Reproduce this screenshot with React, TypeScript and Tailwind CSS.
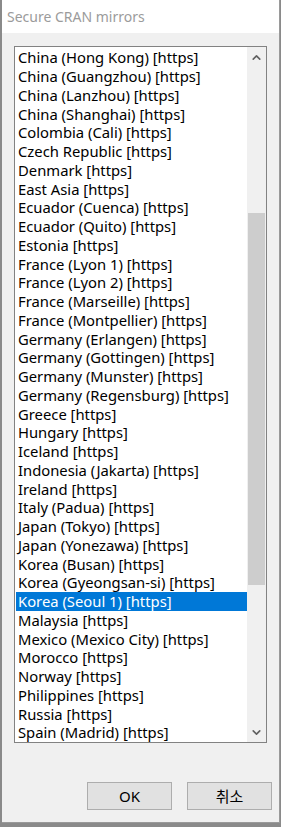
import { ChevronDown, ChevronUp } from "lucide-react";

const mirrors = [
  "China (Hong Kong) [https]",
  "China (Guangzhou) [https]",
  "China (Lanzhou) [https]",
  "China (Shanghai) [https]",
  "Colombia (Cali) [https]",
  "Czech Republic [https]",
  "Denmark [https]",
  "East Asia [https]",
  "Ecuador (Cuenca) [https]",
  "Ecuador (Quito) [https]",
  "Estonia [https]",
  "France (Lyon 1) [https]",
  "France (Lyon 2) [https]",
  "France (Marseille) [https]",
  "France (Montpellier) [https]",
  "Germany (Erlangen) [https]",
  "Germany (Gottingen) [https]",
  "Germany (Munster) [https]",
  "Germany (Regensburg) [https]",
  "Greece [https]",
  "Hungary [https]",
  "Iceland [https]",
  "Indonesia (Jakarta) [https]",
  "Ireland [https]",
  "Italy (Padua) [https]",
  "Japan (Tokyo) [https]",
  "Japan (Yonezawa) [https]",
  "Korea (Busan) [https]",
  "Korea (Gyeongsan-si) [https]",
  "Korea (Seoul 1) [https]",
  "Malaysia [https]",
  "Mexico (Mexico City) [https]",
  "Morocco [https]",
  "Norway [https]",
  "Philippines [https]",
  "Russia [https]",
  "Spain (Madrid) [https]",
];

const selected = "Korea (Seoul 1) [https]";

function Scrollbar() {
  return (
    <div className="flex w-[19px] shrink-0 flex-col bg-[#f0f0f0]">
      <div className="flex h-[20px] items-center justify-center text-[#606060]">
        <ChevronUp size={13} strokeWidth={3} />
      </div>
      <div className="h-[146px]" />
      <div className="mx-[1px] h-[372px] bg-[#cdcdcd]" />
      <div className="flex-1" />
      <div className="flex h-[20px] items-center justify-center text-[#606060]">
        <ChevronDown size={13} strokeWidth={3} />
      </div>
    </div>
  );
}

export default function App() {
  return (
    <div
      className="h-[827px] w-[281px] overflow-hidden bg-[#8a8a8a]"
      style={{ fontFamily: '"Noto Sans", "Noto Sans CJK KR", sans-serif' }}
    >
      <div className="ml-[2px] flex h-[823px] w-[278px] flex-col border-r border-b border-[#9a9a9a] bg-[#f0f0f0]">
        <div className="flex h-[33px] items-center bg-white pl-[5px] text-[14px] text-[#9b9b9b]">
          Secure CRAN mirrors
        </div>

        <div className="mx-[12px] mt-[13px] flex h-[697px] border border-[#828282] bg-white">
          <div className="flex-1 overflow-hidden pt-[1px] pl-[1px]">
            {mirrors.map((m) => (
              <div
                key={m}
                className={
                  m === selected
                    ? "flex h-[18.75px] items-center whitespace-nowrap bg-[#0078d7] pl-[2px] text-[14.8px] text-white"
                    : "flex h-[18.75px] items-center whitespace-nowrap pl-[2px] text-[14.8px] text-black"
                }
              >
                {m}
              </div>
            ))}
          </div>
          <Scrollbar />
        </div>

        <div className="mt-[39px] flex justify-end gap-[15px] pr-[7px]">
          <button
            type="button"
            className="h-[28px] w-[85px] border border-[#adadad] bg-[#e1e1e1] text-[15px] text-black"
          >
            OK
          </button>
          <button
            type="button"
            className="h-[28px] w-[85px] border border-[#adadad] bg-[#e1e1e1] text-[15px] text-black"
          >
            취소
          </button>
        </div>
      </div>
    </div>
  );
}
